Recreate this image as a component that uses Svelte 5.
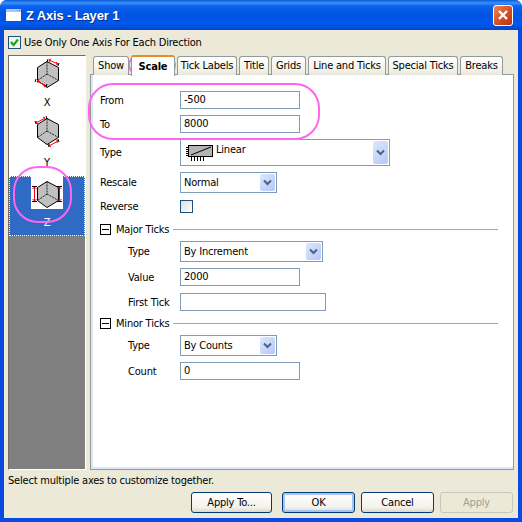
<script>
  const tabs = [
    { name: 'Show', width: 36 },
    { name: 'Scale', width: 44, active: true },
    { name: 'Tick Labels', width: 60 },
    { name: 'Title', width: 30 },
    { name: 'Grids', width: 35 },
    { name: 'Line and Ticks', width: 78 },
    { name: 'Special Ticks', width: 70 },
    { name: 'Breaks', width: 43 }
  ];

  // red size arrows for each axis thumbnail
  const axes = [
    {
      name: 'X',
      shift: 0,
      arrows: ['M18 4 L27 8 M20 3 L18 4 L19 6 M25 6 L27 8 L25 9', 'M6 25 L15 30 M8 24 L6 25 L7 27 M13 28 L15 30 L13 31'],
      ends: ['M17 3 L16 6', 'M28 7 L27 10', 'M5 23 L4 26', 'M16 28 L15 31']
    },
    {
      name: 'Y',
      shift: -3,
      arrows: ['M5 10 L14 5 M7 11 L5 10 L6 8 M12 4 L14 5 L13 7', 'M18 33 L27 28 M20 34 L18 33 L19 31 M25 27 L27 28 L26 30'],
      ends: ['M4 8 L5 11', 'M15 3 L16 6', 'M17 31 L18 34', 'M27 26 L28 29']
    },
    {
      name: 'Z',
      shift: 0,
      selected: true,
      arrows: ['M3.5 11 V25 M1.5 13 L3.5 11 L5.5 13 M1.5 23 L3.5 25 L5.5 23', 'M28.5 11 V25 M26.5 13 L28.5 11 L30.5 13 M26.5 23 L28.5 25 L30.5 23'],
      ends: ['M1 10.5 H6', 'M1 25.5 H6', 'M26 10.5 H31', 'M26 25.5 H31']
    }
  ];
</script>

{#snippet chevron()}
  <span class="drop">
    <svg width="9" height="7" viewBox="0 0 9 7"><path d="M1 1.5 L4.5 5 L8 1.5" fill="none" stroke="#4d6185" stroke-width="2" /></svg>
  </span>
{/snippet}

{#snippet minus()}
  <svg class="minus" width="11" height="11" viewBox="0 0 11 11">
    <rect x="0.5" y="0.5" width="10" height="10" fill="#fff" stroke="#000" />
    <path d="M2 5.5 H9" stroke="#000" />
  </svg>
{/snippet}

<div class="window">
  <div class="titlebar">
    <svg class="appicon" width="15" height="12" viewBox="0 0 15 12">
      <rect width="15" height="12" fill="#fff" />
      <rect width="15" height="3" fill="#a9c8f5" />
      <rect x="11" y="1" width="1" height="1" fill="#e8803c" />
      <rect x="13" y="1" width="1" height="1" fill="#e04a30" />
    </svg>
    <span class="title">Z Axis - Layer 1</span>
    <span class="close">
      <svg width="12" height="12" viewBox="0 0 12 12"><path d="M2 2 L10 10 M10 2 L2 10" stroke="#fff" stroke-width="2.4" /></svg>
    </span>
  </div>

  <div class="client">
    <label class="usecheck">
      <span class="box">
        <svg width="11" height="11" viewBox="0 0 11 11"><path d="M2 5 L4.5 8 L9 2.5" fill="none" stroke="#21a121" stroke-width="2.2" /></svg>
      </span>
      Use Only One Axis For Each Direction
    </label>

    <div class="main">
      <div class="axislist">
        {#each axes as axis}
          <div class="axisrow" class:selected={axis.selected}>
            <svg class="cube" width="32" height="33" viewBox="0 0 32 33">
              <g transform="translate(0 {axis.shift})">
                <path d="M16 5.5 L27.5 11.5 V24.5 L16 31.5 L6.5 24.5 V11.5 Z" fill="#c0c0c0" stroke="#000" />
                <path d="M16 5.5 V18 M16 18 L6.5 24.5 M16 18 L27.5 24.5" fill="none" stroke="#222" stroke-dasharray="2 1" />
                {#each axis.ends as end}<path d={end} stroke="#000" fill="none" />{/each}
                {#each axis.arrows as arrow}<path d={arrow} stroke="#f00" fill="none" />{/each}
              </g>
            </svg>
            <span class="axisname">{axis.name}</span>
          </div>
        {/each}
      </div>

      <div class="tabcol">
        <div class="tabs">
          {#each tabs as tab}
            <div class="tab" class:active={tab.active} style="width: {tab.width}px">{tab.name}</div>
          {/each}
        </div>
        <div class="panel">
          <div class="row first"><span class="lab">From</span><span class="input w120">-500</span></div>
          <div class="row"><span class="lab">To</span><span class="input w120">8000</span></div>
          <div class="row"><span class="lab">Type</span>
            <span class="combo typecombo">
              <svg class="scaleicon" width="27" height="17" viewBox="0 0 27 17">
                <rect x="2.5" y="0.5" width="24" height="11" fill="#b4b4b4" stroke="#000" />
                <path d="M5 10 L25 2 M0 2.5 H3 M0 4.5 H3 M0 6.5 H3 M0 8.5 H3 M0 10.5 H3 M5.5 12 V16 M8.5 12 V16 M11.5 12 V16 M14.5 12 V16 M17.5 12 V16" stroke="#000" fill="none" />
              </svg>
              <span class="linear">Linear</span>
              {@render chevron()}
            </span>
          </div>
          <div class="row"><span class="lab">Rescale</span><span class="combo w97">Normal{@render chevron()}</span></div>
          <div class="row gap7"><span class="lab">Reverse</span><span class="revbox"></span></div>

          <div class="group gap11">{@render minus()}<span>Major Ticks</span><i class="rule"></i></div>
          <div class="row sub gap6"><span class="lab">Type</span><span class="combo w143">By Increment{@render chevron()}</span></div>
          <div class="row sub"><span class="lab">Value</span><span class="input w120">2000</span></div>
          <div class="row sub gap7"><span class="lab">First Tick</span><span class="input w146"></span></div>

          <div class="group gap7">{@render minus()}<span>Minor Ticks</span><i class="rule"></i></div>
          <div class="row sub gap6"><span class="lab">Type</span><span class="combo w97">By Counts{@render chevron()}</span></div>
          <div class="row sub"><span class="lab">Count</span><span class="input w120">0</span></div>
        </div>
      </div>
    </div>

    <div class="hint">Select multiple axes to customize together.</div>

    <div class="buttons">
      <button class="b-apply">Apply To...</button>
      <button class="b-ok">OK</button>
      <button class="b-cancel">Cancel</button>
      <button class="b-dis" disabled>Apply</button>
    </div>
  </div>

  <!-- pink hand-drawn highlights on top of the dialog -->
  <svg class="marks" width="522" height="522" viewBox="0 0 522 522">
    <g fill="none" stroke="#ff66ee" stroke-width="2">
      <rect x="89" y="84" width="230" height="55" rx="24" />
      <rect x="129" y="56" width="46" height="18" rx="9" />
      <rect x="14" y="167" width="57" height="55" rx="24" />
    </g>
  </svg>
</div>

<style>
  :global(body) {
    margin: 0;
    background: #fff;
  }

  .window {
    position: relative;
    width: 522px;
    height: 522px;
    box-sizing: border-box;
    display: flex;
    flex-direction: column;
    background: #0a4ae0;
    border-radius: 7px 7px 0 0;
    overflow: hidden;
    font: 11px/13px "DejaVu Sans Condensed", "Noto Sans", sans-serif;
    letter-spacing: -0.2px;
    color: #000;
  }

  .titlebar {
    height: 30px;
    flex: none;
    display: flex;
    align-items: center;
    padding: 0 9px 0 6px;
    background: linear-gradient(#0a5bd8 0, #3c92fb 3px, #0d62ec 6px, #0054e3 14px, #0058ee 24px, #0046c8 30px);
  }

  .appicon {
    margin-right: 5px;
  }

  .title {
    flex: 1;
    color: #fff;
    font: bold 13px "Liberation Sans", sans-serif;
    letter-spacing: -0.15px;
    text-shadow: 1px 1px #0a2f8c;
  }

  .close {
    width: 18px;
    height: 19px;
    display: flex;
    align-items: center;
    justify-content: center;
    border: 1px solid #fff;
    border-radius: 3px;
    background: linear-gradient(135deg, #e9865f, #d3481f 60%, #b83510);
  }

  .client {
    flex: 1;
    margin: 0 4px 4px;
    min-height: 0;
    display: flex;
    flex-direction: column;
    background: #ece9d8;
  }

  .usecheck {
    height: 25px;
    flex: none;
    display: flex;
    align-items: center;
    gap: 3px;
    padding-left: 4px;
    box-sizing: border-box;
    padding-bottom: 1px;
  }

  .box {
    width: 13px;
    height: 13px;
    box-sizing: border-box;
    border: 1px solid #1c5180;
    background: #f4f4ee;
  }

  .box svg {
    display: block;
  }

  .main {
    height: 415px;
    flex: none;
    display: flex;
    padding-left: 4px;
  }

  .axislist {
    width: 78px;
    box-sizing: border-box;
    background: #808080;
    border: 1px solid #fff;
    border-top-color: #716f64;
    border-left-color: #716f64;
  }

  .axisrow {
    height: 60px;
    box-sizing: border-box;
    display: flex;
    flex-direction: column;
    align-items: center;
    background: #fff;
  }

  .axisrow.selected {
    background: #316ac5;
    color: #fff;
    outline: 1px dotted #fff;
    outline-offset: -1px;
  }

  .cube {
    display: block;
    background: #fff;
    flex: none;
  }

  .axisname {
    margin-top: 7px;
  }

  .tabcol {
    margin-left: 4px;
    width: 424px;
    display: flex;
    flex-direction: column;
  }

  .tabs {
    height: 20px;
    flex: none;
    display: flex;
    align-items: flex-end;
    gap: 2px;
    padding-left: 3px;
    position: relative;
    z-index: 1;
    margin-bottom: -1px;
  }

  .tab {
    height: 19px;
    box-sizing: border-box;
    border: 1px solid #919b9c;
    border-bottom: 0;
    border-radius: 3px 3px 0 0;
    background: linear-gradient(#fff, #f3f2ea 70%, #e8e6da);
    text-align: center;
    line-height: 18px;
  }

  .tab.active {
    height: 21px;
    margin-bottom: -1px;
    background: #fff;
    font-weight: bold;
    border-top: 2px solid #e68b2c;
    line-height: 19px;
  }

  .panel {
    flex: 1;
    min-height: 0;
    box-sizing: border-box;
    background: #fff;
    border: 1px solid #919b9c;
    box-shadow: inset 2px 0 #dde6f8, inset 0 -2px #dde6f8;
    padding: 0 15px 0 9px;
  }

  .row {
    display: flex;
    align-items: center;
    margin-top: 6px;
  }

  .first {
    margin-top: 16px;
  }

  .sub {
    padding-left: 28px;
  }

  .gap6 { margin-top: 6px; }
  .gap7 { margin-top: 7px; }
  .gap11 { margin-top: 11px; }

  .lab {
    width: 80px;
    flex: none;
  }

  .sub .lab {
    width: 52px;
  }

  .input {
    height: 18px;
    box-sizing: border-box;
    border: 1px solid #7f9db9;
    background: #fff;
    padding-left: 3px;
    line-height: 15px;
  }

  .w120 { width: 120px; }
  .w146 { width: 146px; }
  .w97 { width: 97px; }
  .w143 { width: 143px; }

  .combo {
    height: 21px;
    box-sizing: border-box;
    border: 1px solid #7f9db9;
    background: #fff;
    padding-left: 3px;
    display: flex;
    align-items: center;
    justify-content: space-between;
    padding-right: 1px;
  }

  .typecombo {
    width: 210px;
    height: 27px;
    justify-content: flex-start;
    padding-left: 5px;
  }

  .scaleicon {
    margin-top: 2px;
  }

  .linear {
    flex: 1;
    margin: -7px 0 0 3px;
  }

  .drop {
    width: 15px;
    height: calc(100% - 2px);
    display: flex;
    align-items: center;
    justify-content: center;
    border-radius: 2px;
    background: linear-gradient(135deg, #dce6fd, #b5c8f7);
  }

  .revbox {
    width: 13px;
    height: 13px;
    box-sizing: border-box;
    border: 1px solid #1c5180;
    background: linear-gradient(135deg, #dcdcd7, #fff);
  }

  .group {
    height: 11px;
    display: flex;
    align-items: center;
  }

  .minus {
    flex: none;
    margin-right: 5px;
  }

  .rule {
    flex: 1;
    height: 1px;
    background: #a7a69a;
    margin-left: 4px;
  }

  .hint {
    height: 22px;
    flex: none;
    line-height: 22px;
    padding-left: 4px;
  }

  .buttons {
    display: flex;
    justify-content: flex-end;
    gap: 6px;
    padding-right: 5px;
  }

  button {
    width: 73px;
    height: 21px;
    padding: 0;
    font: inherit;
    letter-spacing: inherit;
    color: #000;
    border: 1px solid #003c74;
    border-radius: 3px;
    background: linear-gradient(#fff, #f3f2ec 75%, #dcd8cc);
  }

  .b-apply {
    width: 81px;
    margin-right: 4px;
  }

  .b-ok {
    box-shadow: inset 0 0 0 2px #a9c4f0;
  }

  .b-dis {
    color: #a1a192;
    border-color: #c9c7ba;
    background: #ece9d8;
  }

  .marks {
    position: absolute;
    left: 0;
    top: 0;
    pointer-events: none;
  }
</style>
